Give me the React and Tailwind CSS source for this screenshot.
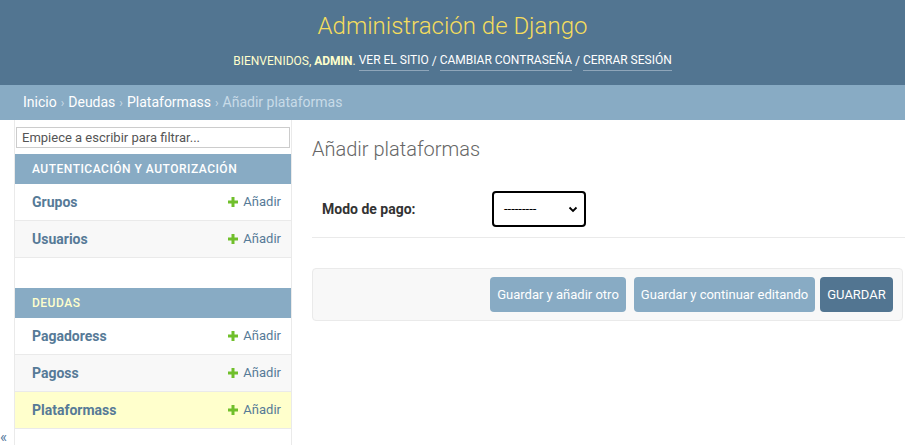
import React from "react";

const Plus = () => (
  <svg width="10" height="10" viewBox="0 0 10 10" className="mr-[5px]">
    <path d="M3.5 0h3v3.5H10v3H6.5V10h-3V6.5H0v-3h3.5z" fill="#70bf2b" />
  </svg>
);

const ModelRow = ({ name, alt, current }) => (
  <div
    className={`flex h-[37px] items-center justify-between border-b border-[#eaeaea] pl-[17px] pr-[10px] ${
      current ? "bg-[#ffffcc]" : alt ? "bg-[#f8f8f8]" : "bg-white"
    }`}
  >
    <span className="text-[14px] font-bold text-[#567a97]">{name}</span>
    <span className="flex items-center text-[13px] text-[#567a97]">
      <Plus />
      Añadir
    </span>
  </div>
);

const Caption = ({ children, yellow }) => (
  <div
    className={`flex h-[30px] items-center bg-[#88abc4] pl-[17px] text-[12px] font-medium tracking-[0.5px] ${
      yellow ? "text-[#ffffcc]" : "text-white"
    }`}
  >
    {children}
  </div>
);

export default function App() {
  return (
    <div className="min-h-screen bg-white font-['Roboto',sans-serif] text-[#333]">
      {/* Header */}
      <div className="flex h-[85px] flex-col items-center bg-[#527591]">
        <div className="mt-[11px] text-[24px] font-light leading-[30px] text-[#f5dd5d]">
          Administración de Django
        </div>
        <div className="mt-[10px] flex items-center text-[12px] uppercase text-[#ffffcc]">
          <span>Bienvenidos,&nbsp;</span>
          <strong className="font-bold">admin</strong>
          <span>.&nbsp;</span>
          <span className="border-b border-[#8fa6ba] pb-[1px] text-white">Ver el sitio</span>
          <span className="text-white">&nbsp;/&nbsp;</span>
          <span className="border-b border-[#8fa6ba] pb-[1px] text-white">Cambiar contraseña</span>
          <span className="text-white">&nbsp;/&nbsp;</span>
          <span className="border-b border-[#8fa6ba] pb-[1px] text-white">Cerrar sesión</span>
        </div>
      </div>

      {/* Breadcrumbs */}
      <div className="flex h-[35px] items-center bg-[#88abc4] pl-[23px] text-[14px] text-white">
        <span>Inicio</span>
        <span className="px-[4px] text-[12px] text-[#c8dbe8]">›</span>
        <span>Deudas</span>
        <span className="px-[4px] text-[12px] text-[#c8dbe8]">›</span>
        <span>Plataformass</span>
        <span className="px-[4px] text-[12px] text-[#c8dbe8]">›</span>
        <span className="text-[#c8dbe8]">Añadir plataformas</span>
      </div>

      {/* Body */}
      <div className="flex">
        <div className="flex w-[15px] flex-col border-r border-[#eaeaea] pt-[311px]">
          <span className="text-[15px] leading-[12px] text-[#54789a]">«</span>
        </div>

        <div className="w-[277px] border-r border-[#eaeaea] pb-[20px]">
          <div className="mx-[1px] mt-[7px] flex h-[21px] items-center border border-[#cccccc] px-[5px] text-[13px] text-[#555]">
            Empiece a escribir para filtrar...
          </div>
          <div className="mt-[6px]">
            <Caption>AUTENTICACIÓN Y AUTORIZACIÓN</Caption>
            <ModelRow name="Grupos" />
            <ModelRow name="Usuarios" alt />
          </div>
          <div className="mt-[30px]">
            <Caption yellow>DEUDAS</Caption>
            <ModelRow name="Pagadoress" />
            <ModelRow name="Pagoss" alt />
            <ModelRow name="Plataformass" current />
          </div>
        </div>

        <div className="flex-1 pl-5 pr-[2px] pt-[17px]">
          <h1 className="text-[20px] font-light leading-[24px] text-[#666]">Añadir plataformas</h1>
          <div className="-mr-[2px] mt-[20px] flex h-[57px] items-center border-b border-[#eaeaea] pl-[10px]">
            <span className="w-[170px] text-[14px] font-bold text-[#333]">Modo de pago:</span>
            <div className="flex h-[36px] w-[94px] items-center justify-between rounded-[4px] border-2 border-black pl-[10px] pr-[6px] text-[13px] text-black">
              <span>---------</span>
              <svg width="10" height="10" viewBox="0 0 10 10">
                <path d="M1.5 3.5L5 7l3.5-3.5" stroke="#000" strokeWidth="1.8" fill="none" />
              </svg>
            </div>
          </div>
          <div className="mt-[30px] flex h-[53px] items-center justify-end rounded-[4px] border border-[#eaeaea] bg-[#f8f8f8] pr-[9px]">
            <button className="h-[35px] w-[136px] rounded-[4px] bg-[#88abc4] text-[13px] text-white">
              Guardar y añadir otro
            </button>
            <button className="ml-[8px] h-[35px] w-[181px] rounded-[4px] bg-[#88abc4] text-[13px] text-white">
              Guardar y continuar editando
            </button>
            <button className="ml-[5px] h-[35px] w-[73px] rounded-[4px] bg-[#527591] text-[13px] text-white">
              GUARDAR
            </button>
          </div>
        </div>
      </div>
    </div>
  );
}
